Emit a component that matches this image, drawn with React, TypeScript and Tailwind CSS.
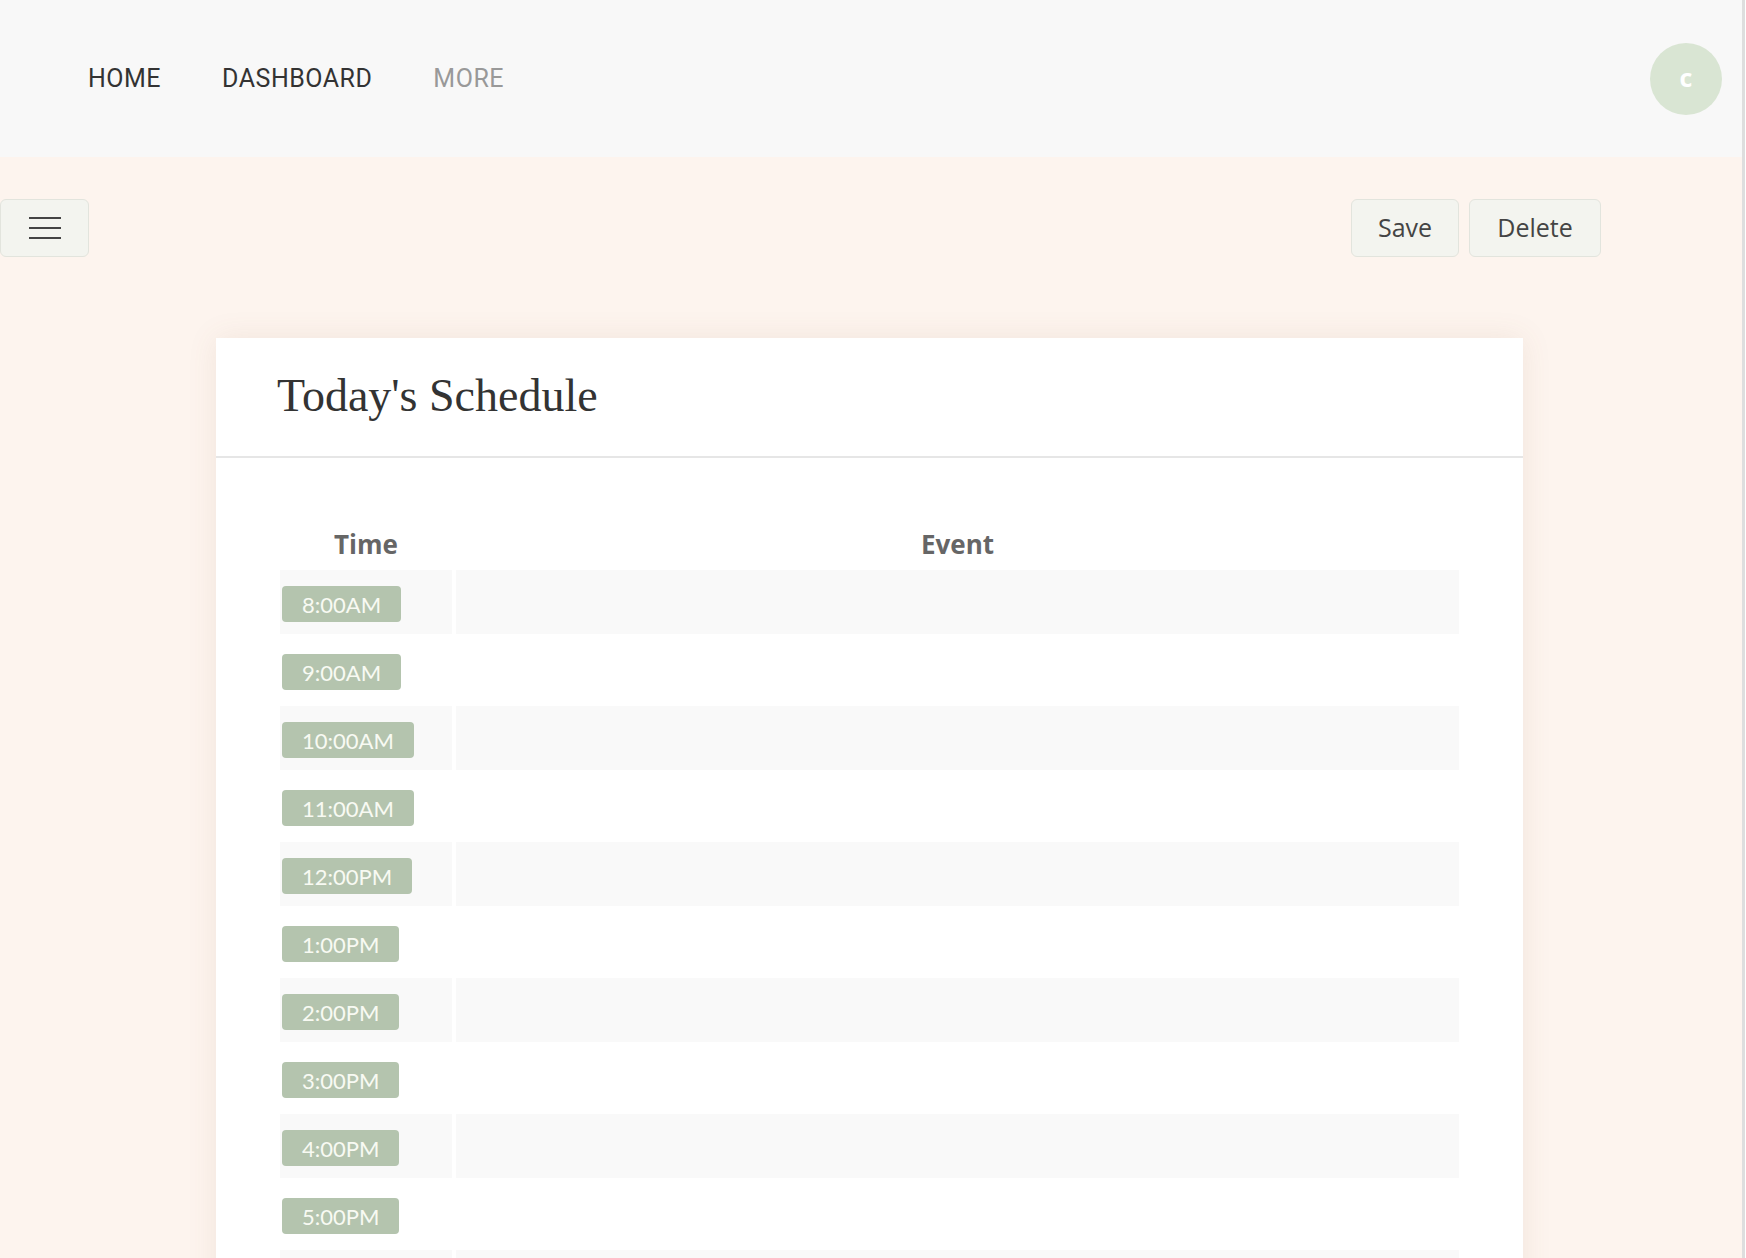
import React from "react";

const times = [
  "8:00AM",
  "9:00AM",
  "10:00AM",
  "11:00AM",
  "12:00PM",
  "1:00PM",
  "2:00PM",
  "3:00PM",
  "4:00PM",
  "5:00PM",
  "6:00PM",
  "7:00PM",
];

export default function App() {
  return (
    <div className="flex h-[1258px] w-full overflow-hidden bg-[#fdf4ee]">
      <div className="flex min-w-0 flex-1 flex-col">
        {/* Top nav */}
        <header className="flex h-[157px] shrink-0 items-center justify-between bg-[#f8f8f8] pl-[88px] pr-[20px]">
          <nav className="flex items-center gap-[61px] font-['Roboto',sans-serif] text-[25px] leading-none tracking-[0.5px]">
            <a className="text-[#333333]">HOME</a>
            <a className="text-[#333333]">DASHBOARD</a>
            <a className="text-[#999999]">MORE</a>
          </nav>
          <div className="flex h-[72px] w-[72px] items-center justify-center rounded-full bg-[#d9e5d3] pb-[2px] font-['Open_Sans',sans-serif] text-[25px] font-bold text-white">
            c
          </div>
        </header>

        {/* Toolbar */}
        <div className="mt-[42px] flex h-[58px] shrink-0 items-stretch justify-between pr-[141px]">
          <button className="flex w-[89px] flex-col items-center justify-center gap-[8px] rounded-[6px] border border-[#e2e4dd] bg-[#f3f4ef]">
            <span className="block h-[2px] w-[32px] bg-[#444444]" />
            <span className="block h-[2px] w-[32px] bg-[#444444]" />
            <span className="block h-[2px] w-[32px] bg-[#444444]" />
          </button>
          <div className="flex gap-[10px] font-['Open_Sans',sans-serif] text-[25px] font-medium text-[#444444]">
            <button className="flex w-[108px] items-center justify-center rounded-[6px] border border-[#e2e4dd] bg-[#f3f4ef] pb-[1px]">
              Save
            </button>
            <button className="flex w-[132px] items-center justify-center rounded-[6px] border border-[#e2e4dd] bg-[#f3f4ef] pb-[1px]">
              Delete
            </button>
          </div>
        </div>

        {/* Card */}
        <div className="ml-[216px] mt-[81px] w-[1307px] shrink-0 bg-white shadow-[0_0_28px_rgba(140,100,70,0.10)]">
          <div className="flex h-[120px] items-center border-b-2 border-[#e6e6e6] pl-[61px]">
            <h1 className="pb-[2px] font-['Liberation_Serif',serif] text-[46px] font-normal leading-none text-[#333333]">
              Today's Schedule
            </h1>
          </div>
          <div className="flex flex-col gap-[4px] px-[64px] pt-[64px] pb-[40px]">
            <div className="grid h-[44px] grid-cols-[172px_1fr] gap-[4px] font-['Open_Sans',sans-serif] text-[26px] font-bold text-[#666666]">
              <div className="flex items-center justify-center">Time</div>
              <div className="flex items-center justify-center">Event</div>
            </div>
            {times.map((t, i) => {
              const shaded = i % 2 === 0;
              return (
                <div key={t} className="grid h-[64px] grid-cols-[172px_1fr] gap-[4px]">
                  <div className={`flex items-start pl-[2px] pt-[16px] ${shaded ? "bg-[#f9f9f9]" : ""}`}>
                    <span className="flex h-[36px] items-center rounded-[4px] bg-[#b4c4ae] px-[20px] font-['Lato',sans-serif] text-[22px] text-[#f8faf3]">
                      {t}
                    </span>
                  </div>
                  <div className={shaded ? "bg-[#f9f9f9]" : ""} />
                </div>
              );
            })}
          </div>
        </div>
      </div>
      <div className="w-[4px] shrink-0 border-r border-white bg-[#dedede]" />
    </div>
  );
}
